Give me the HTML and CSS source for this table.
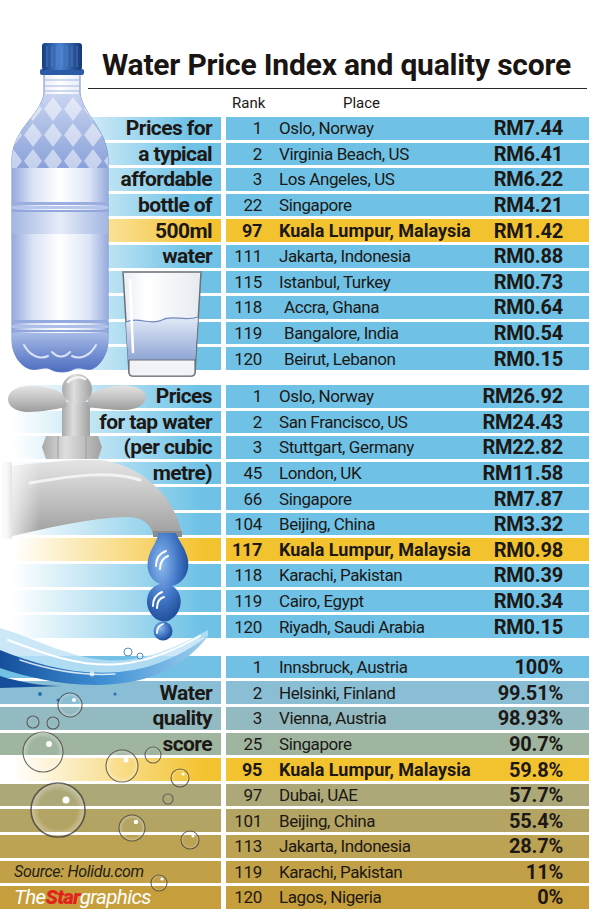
FILE: index.html
```html
<!DOCTYPE html>
<html lang="en">
<head>
<meta charset="utf-8">
<title>Water Price Index and quality score</title>
<link rel="stylesheet" href="styles.css">
</head>
<body>
<div class="page">
  <svg class="art" viewBox="0 0 240 924" width="240" height="924" aria-hidden="true">
    <defs>
      <linearGradient id="gCap" x1="0" x2="1" y1="0" y2="0">
        <stop offset="0" stop-color="#163c80"/><stop offset=".45" stop-color="#4a82cf"/><stop offset="1" stop-color="#143877"/>
      </linearGradient>
      <linearGradient id="gBody" x1="0" x2="1" y1="0" y2="0">
        <stop offset="0" stop-color="#95aadc"/><stop offset=".22" stop-color="#dbe3f5"/><stop offset=".5" stop-color="#ffffff"/><stop offset=".8" stop-color="#dde5f6"/><stop offset="1" stop-color="#97abdc"/>
      </linearGradient>
      <linearGradient id="gBand" x1="0" x2="1" y1="0" y2="0">
        <stop offset="0" stop-color="#a3b6e2"/><stop offset=".5" stop-color="#e6ecf8"/><stop offset="1" stop-color="#a3b6e2"/>
      </linearGradient>
      <linearGradient id="gShoulder" x1="0" x2="0" y1="0" y2="1">
        <stop offset="0" stop-color="#c8d4f0"/><stop offset="1" stop-color="#8aa1d9"/>
      </linearGradient>
      <linearGradient id="gBottom" x1="0" x2="0" y1="0" y2="1">
        <stop offset="0" stop-color="#a6bae6"/><stop offset="1" stop-color="#4b6cc0"/>
      </linearGradient>
      <pattern id="pDiam" width="20" height="26" patternUnits="userSpaceOnUse" x="3" y="96">
        <polygon points="10,1 19,13 10,25 1,13" fill="#ffffff" fill-opacity=".5"/>
      </pattern>
      <linearGradient id="gWater" x1="0" x2="0" y1="0" y2="1">
        <stop offset="0" stop-color="#e4ebf7"/><stop offset="1" stop-color="#8ea5d5"/>
      </linearGradient>
      <linearGradient id="gGlass" x1="0" x2="1" y1="0" y2="0">
        <stop offset="0" stop-color="#e9edf3"/><stop offset=".3" stop-color="#ffffff"/><stop offset="1" stop-color="#e6eaf0"/>
      </linearGradient>
      <linearGradient id="gTap" x1="0" x2="0" y1="0" y2="1">
        <stop offset="0" stop-color="#e4e4e4"/><stop offset=".5" stop-color="#c2c2c2"/><stop offset="1" stop-color="#9c9c9c"/>
      </linearGradient>
      <linearGradient id="gTapH" x1="0" x2="1" y1="0" y2="0">
        <stop offset="0" stop-color="#a9a9a9"/><stop offset=".4" stop-color="#dedede"/><stop offset="1" stop-color="#a0a0a0"/>
      </linearGradient>
      <linearGradient id="gFade" x1="0" x2="1" y1="0" y2="0">
        <stop offset="0" stop-color="#ffffff"/><stop offset="1" stop-color="#ffffff" stop-opacity="0"/>
      </linearGradient>
      <radialGradient id="gDrop" cx=".35" cy=".35" r=".7">
        <stop offset="0" stop-color="#8dbaf0"/><stop offset=".6" stop-color="#3f74c4"/><stop offset="1" stop-color="#1d4a96"/>
      </radialGradient>
      <linearGradient id="gWave" x1="0" x2="1" y1="0" y2="0">
        <stop offset="0" stop-color="#154f9c"/><stop offset=".5" stop-color="#3f8fd4"/><stop offset="1" stop-color="#9fd0f0"/>
      </linearGradient>
      <radialGradient id="gBub" cx=".5" cy=".5" r=".5">
        <stop offset=".7" stop-color="#ffffff" stop-opacity="0"/><stop offset="1" stop-color="#ffffff" stop-opacity=".35"/>
      </radialGradient>
    </defs>

    <!-- bottle -->
    <g class="bottle">
      <path d="M44,74 L80,74 L80,94 C84,116 106,128 108,158 L108,340 C108,354 100,366 92,369 C86,371 80,366 74,369 C68,373 56,373 50,369 C44,366 38,371 30,369 C20,366 12,354 12,340 L12,158 C14,128 40,116 44,94 Z" fill="url(#gBody)" stroke="#7289c9" stroke-width="1"/>
      <path d="M44,94 C40,116 14,128 12,158 L12,168 L108,168 L108,158 C106,128 84,116 80,94 Z" fill="url(#gShoulder)"/>
      <path d="M44,94 C40,116 14,128 12,158 L12,168 L108,168 L108,158 C106,128 84,116 80,94 Z" fill="url(#pDiam)"/>
      <rect x="12" y="168" width="96" height="34" fill="url(#gBody)"/>
      <rect x="12" y="202" width="96" height="3" fill="#9aafdf"/>
      <rect x="12" y="206" width="96" height="3" fill="#b7c6ec"/>
      <rect x="12" y="210" width="96" height="2" fill="#92a8dc"/>
      <rect x="12" y="212" width="96" height="22" fill="url(#gBand)"/>
      <rect x="12" y="234" width="96" height="86" fill="url(#gBody)"/>
      <rect x="12" y="320" width="96" height="3" fill="#94a9dc"/>
      <rect x="12" y="325" width="96" height="3" fill="#aebfe8"/>
      <rect x="12" y="330" width="96" height="2" fill="#90a6da"/>
      <path d="M12,333 L108,333 L108,340 C108,354 100,366 92,369 C86,371 80,366 74,369 C68,373 56,373 50,369 C44,366 38,371 30,369 C20,366 12,354 12,340 Z" fill="url(#gBottom)"/>
      <path d="M24,345 C30,356 40,360 48,356 M72,356 C80,360 90,356 96,345 M52,352 C58,358 64,358 70,352" fill="none" stroke="#dbe4f7" stroke-width="2" stroke-linecap="round"/>
      <path d="M44,80 L80,80 M44,86 L80,86 M44,91 L80,91" stroke="#a3b5e2" stroke-width="1.2"/>
      <rect x="40" y="69" width="44" height="6" rx="2" fill="#2b5ba6"/>
      <rect x="42" y="43" width="40" height="27" rx="3" fill="url(#gCap)"/>
      <path d="M47,46 V67 M52,46 V67 M57,46 V67 M62,46 V67 M67,46 V67 M72,46 V67 M77,46 V67" stroke="#6b97d8" stroke-opacity=".55" stroke-width="1"/>
    </g>

    <!-- glass -->
    <g class="glass">
      <path d="M123,272 L201,272 L195,372 Q195,376 191,376 L133,376 Q129,376 129,372 Z" fill="url(#gGlass)" stroke="#6c7079" stroke-width="1.5"/>
      <path d="M126,322 C138,316 150,326 162,320 C172,314 184,322 198,317 L195,360 L128,360 Z" fill="url(#gWater)"/>
      <path d="M126,322 C138,316 150,326 162,320 C172,314 184,322 198,317" fill="none" stroke="#6f88c2" stroke-width="1.2"/>
      <path d="M129,360 L195,360 L195,372 Q195,376 191,376 L133,376 Q129,376 129,372 Z" fill="#f1f3f6" stroke="#6c7079" stroke-width="1.2"/>
      <path d="M130,280 L133,352" stroke="#ffffff" stroke-width="2.5" stroke-linecap="round"/>
      <path d="M123,272 L201,272" stroke="#8a8e96" stroke-width="2"/>
    </g>

    <!-- tap -->
    <g class="tap">
      <path d="M5,466 C35,464 60,461 75,460 L100,460 C135,464 166,488 178,520 L182,534 L153,534 C150,523 142,517 126,517 C90,518 45,528 5,538 Z" fill="url(#gTap)"/>
      <path d="M30,483 C70,476 110,470 140,480" fill="none" stroke="#f2f2f2" stroke-width="3" stroke-linecap="round"/>
      <path d="M153,531 L182,531 L182,537 L153,537 Z" fill="#8c8c8c"/>
      <rect x="2" y="462" width="10" height="77" rx="2" fill="url(#gTapH)"/>
      <path d="M46,436 L98,436 L102,447 L98,459 L46,459 L42,447 Z" fill="url(#gTapH)"/>
      <path d="M58,436 V459 M86,436 V459" stroke="#9a9a9a" stroke-width="1"/>
      <rect x="62" y="402" width="28" height="34" fill="url(#gTapH)"/>
      <path d="M66,396 C50,384 20,382 10,393 C4,402 12,412 28,412 C42,412 56,409 66,407 Z" fill="url(#gTap)"/>
      <path d="M88,396 C104,384 134,382 144,392 C150,401 140,410 124,410 C110,410 98,408 88,407 Z" fill="url(#gTap)"/>
      <circle cx="77" cy="389" r="15" fill="url(#gTapH)"/>
      <path d="M68,382 C72,377 80,376 85,379" fill="none" stroke="#f4f4f4" stroke-width="2.5" stroke-linecap="round"/>
      <rect x="0" y="455" width="40" height="90" fill="url(#gFade)"/>
    </g>

    <!-- drops -->
    <g class="drops">
      <path d="M158,533 L176,533 C178,540 186,548 188,560 C190,574 182,584 172,586 C184,592 184,612 170,620 C160,626 146,614 147,600 C148,590 154,586 160,584 C150,580 146,570 148,560 C150,548 158,542 158,533 Z" fill="url(#gDrop)"/>
      <circle cx="163" cy="631" r="9.5" fill="url(#gDrop)"/>
      <path d="M156,566 C156,558 160,553 166,551 M160,569 C160,562 163,558 168,556" fill="none" stroke="#ffffff" stroke-width="2" stroke-linecap="round"/>
      <path d="M153,606 C153,598 157,594 162,592 M157,608 C157,602 160,598 164,597" fill="none" stroke="#ffffff" stroke-width="2" stroke-linecap="round"/>
      <path d="M157,633 C157,628 160,625 163,624" fill="none" stroke="#ffffff" stroke-width="1.8" stroke-linecap="round"/>
    </g>

    <!-- wave -->
    <g class="wave">
      <path d="M0,628 C40,640 80,664 125,660 C160,656 185,642 208,630 L208,636 C185,652 160,668 120,672 C75,676 35,664 0,650 Z" fill="#bfe2f6" fill-opacity=".8"/>
      <path d="M0,650 C35,664 75,676 120,672 C160,668 185,652 208,636 C190,660 160,680 115,684 C70,688 30,678 0,668 Z" fill="url(#gWave)"/>
      <path d="M0,676 C20,682 40,686 62,686 L0,688 Z" fill="#154f9c"/>
      <path d="M8,640 C40,652 80,668 120,664 C150,661 175,650 200,636" fill="none" stroke="#ffffff" stroke-width="2" stroke-linecap="round"/>
      <path d="M20,660 C50,670 85,676 115,674" fill="none" stroke="#ffffff" stroke-opacity=".8" stroke-width="1.5" stroke-linecap="round"/>
      <circle cx="128" cy="652" r="4" fill="#ffffff" fill-opacity=".6" stroke="#2d6fb5" stroke-width=".8"/>
      <circle cx="140" cy="656" r="3" fill="#ffffff" fill-opacity=".6" stroke="#2d6fb5" stroke-width=".8"/>
      <circle cx="92" cy="674" r="2.5" fill="#ffffff" fill-opacity=".7"/>
      <circle cx="152" cy="648" r="2.5" fill="#ffffff" fill-opacity=".7"/>
      <circle cx="40" cy="694" r="2" fill="#2d6fb5"/>
      <circle cx="115" cy="694" r="1.6" fill="#2d6fb5"/>
      <circle cx="58" cy="700" r="1.5" fill="#2d6fb5"/>
    </g>

    <!-- bubbles -->
    <g class="bubbles" fill="url(#gBub)" stroke="#3b3a36" stroke-opacity=".75" stroke-width="1.1">
      <circle cx="70" cy="705" r="12"/>
      <circle cx="33" cy="722" r="6"/>
      <circle cx="53" cy="723" r="6"/>
      <circle cx="43" cy="752" r="20"/>
      <circle cx="122" cy="766" r="16"/>
      <circle cx="153" cy="755" r="8"/>
      <circle cx="180" cy="778" r="9"/>
      <circle cx="168" cy="799" r="5"/>
      <circle cx="58" cy="810" r="27" stroke-width="1.6"/>
      <circle cx="132" cy="828" r="13"/>
      <circle cx="190" cy="840" r="9"/>
      <circle cx="159" cy="883" r="8"/>
    </g>
    <g class="shine" fill="#ffffff">
      <circle cx="74" cy="700" r="2"/>
      <circle cx="49" cy="744" r="3"/>
      <circle cx="126" cy="760" r="2.5"/>
      <circle cx="66" cy="800" r="3.5"/>
      <circle cx="136" cy="822" r="2.2"/>
      <circle cx="183" cy="774" r="1.6"/>
      <circle cx="162" cy="879" r="1.6"/>
      <circle cx="193" cy="836" r="1.5"/>
    </g>
  </svg>

  <header class="head">
    <h1 class="title">Water Price Index and quality score</h1>
    <div class="rule"></div>
    <div class="colhead"><span class="ch-rank">Rank</span><span class="ch-place">Place</span></div>
  </header>

  <section class="sec sec-bottle">
    <div class="row"><div class="label lb-blue"><span class="lt">Prices for</span></div><div class="cell c-blue"><span class="rank">1</span><span class="place">Oslo, Norway</span><span class="val">RM7.44</span></div></div>
    <div class="row"><div class="label lb-blue"><span class="lt">a typical</span></div><div class="cell c-blue"><span class="rank">2</span><span class="place">Virginia Beach, US</span><span class="val">RM6.41</span></div></div>
    <div class="row"><div class="label lb-blue"><span class="lt">affordable</span></div><div class="cell c-blue"><span class="rank">3</span><span class="place">Los Angeles, US</span><span class="val">RM6.22</span></div></div>
    <div class="row"><div class="label lb-blue"><span class="lt">bottle of</span></div><div class="cell c-blue"><span class="rank">22</span><span class="place">Singapore</span><span class="val">RM4.21</span></div></div>
    <div class="row"><div class="label lb-yellow"><span class="lt">500ml</span></div><div class="cell c-yellow hl"><span class="rank">97</span><span class="place">Kuala Lumpur, Malaysia</span><span class="val">RM1.42</span></div></div>
    <div class="row"><div class="label lb-blue"><span class="lt">water</span></div><div class="cell c-blue"><span class="rank">111</span><span class="place">Jakarta, Indonesia</span><span class="val">RM0.88</span></div></div>
    <div class="row"><div class="label lb-blue"></div><div class="cell c-blue"><span class="rank">115</span><span class="place">Istanbul, Turkey</span><span class="val">RM0.73</span></div></div>
    <div class="row"><div class="label lb-blue"></div><div class="cell c-blue"><span class="rank">118</span><span class="place indent">Accra, Ghana</span><span class="val">RM0.64</span></div></div>
    <div class="row"><div class="label lb-blue"></div><div class="cell c-blue"><span class="rank">119</span><span class="place indent">Bangalore, India</span><span class="val">RM0.54</span></div></div>
    <div class="row"><div class="label lb-blue"></div><div class="cell c-blue"><span class="rank">120</span><span class="place indent">Beirut, Lebanon</span><span class="val">RM0.15</span></div></div>
  </section>

  <section class="sec sec-tap">
    <div class="row"><div class="label lb-fade"><span class="lt">Prices</span></div><div class="cell c-blue"><span class="rank">1</span><span class="place">Oslo, Norway</span><span class="val">RM26.92</span></div></div>
    <div class="row"><div class="label lb-fade"><span class="lt">for tap water</span></div><div class="cell c-blue"><span class="rank">2</span><span class="place">San Francisco, US</span><span class="val">RM24.43</span></div></div>
    <div class="row"><div class="label lb-fade"><span class="lt">(per cubic</span></div><div class="cell c-blue"><span class="rank">3</span><span class="place">Stuttgart, Germany</span><span class="val">RM22.82</span></div></div>
    <div class="row"><div class="label lb-fade"><span class="lt">metre)</span></div><div class="cell c-blue"><span class="rank">45</span><span class="place">London, UK</span><span class="val">RM11.58</span></div></div>
    <div class="row"><div class="label lb-fade"></div><div class="cell c-blue"><span class="rank">66</span><span class="place">Singapore</span><span class="val">RM7.87</span></div></div>
    <div class="row"><div class="label lb-fade"></div><div class="cell c-blue"><span class="rank">104</span><span class="place">Beijing, China</span><span class="val">RM3.32</span></div></div>
    <div class="row"><div class="label lb-yellow"></div><div class="cell c-yellow hl"><span class="rank">117</span><span class="place">Kuala Lumpur, Malaysia</span><span class="val">RM0.98</span></div></div>
    <div class="row"><div class="label lb-fade"></div><div class="cell c-blue"><span class="rank">118</span><span class="place">Karachi, Pakistan</span><span class="val">RM0.39</span></div></div>
    <div class="row"><div class="label lb-fade"></div><div class="cell c-blue"><span class="rank">119</span><span class="place">Cairo, Egypt</span><span class="val">RM0.34</span></div></div>
    <div class="row"><div class="label lb-fade"></div><div class="cell c-blue"><span class="rank">120</span><span class="place">Riyadh, Saudi Arabia</span><span class="val">RM0.15</span></div></div>
  </section>

  <section class="sec sec-quality">
    <div class="row"><div class="label q1"></div><div class="cell q1"><span class="rank">1</span><span class="place">Innsbruck, Austria</span><span class="val">100%</span></div></div>
    <div class="row"><div class="label q2"><span class="lt">Water</span></div><div class="cell q2"><span class="rank">2</span><span class="place">Helsinki, Finland</span><span class="val">99.51%</span></div></div>
    <div class="row"><div class="label q3"><span class="lt">quality</span></div><div class="cell q3"><span class="rank">3</span><span class="place">Vienna, Austria</span><span class="val">98.93%</span></div></div>
    <div class="row"><div class="label q4"><span class="lt">score</span></div><div class="cell q4"><span class="rank">25</span><span class="place">Singapore</span><span class="val">90.7%</span></div></div>
    <div class="row"><div class="label lb-yellow"></div><div class="cell c-yellow hl"><span class="rank">95</span><span class="place">Kuala Lumpur, Malaysia</span><span class="val">59.8%</span></div></div>
    <div class="row"><div class="label q6"></div><div class="cell q6"><span class="rank">97</span><span class="place">Dubai, UAE</span><span class="val">57.7%</span></div></div>
    <div class="row"><div class="label q7"></div><div class="cell q7"><span class="rank">101</span><span class="place">Beijing, China</span><span class="val">55.4%</span></div></div>
    <div class="row"><div class="label q8"></div><div class="cell q8"><span class="rank">113</span><span class="place">Jakarta, Indonesia</span><span class="val">28.7%</span></div></div>
    <div class="row"><div class="label q9 foot"><span class="source">Source: Holidu.com</span></div><div class="cell q9"><span class="rank">119</span><span class="place">Karachi, Pakistan</span><span class="val">11%</span></div></div>
    <div class="row"><div class="label q10 foot"><span class="logo"><span class="l-the">The</span><span class="l-star">Star</span><span class="l-gr">graphics</span></span></div><div class="cell q10"><span class="rank">120</span><span class="place">Lagos, Nigeria</span><span class="val">0%</span></div></div>
  </section>
</div>
</body>
</html>
```

FILE: styles.css
```css
* { box-sizing: border-box; }

html, body {
  margin: 0;
  padding: 0;
  background: #ffffff;
}

body {
  font-family: Roboto, "Liberation Sans", Arial, sans-serif;
  color: #1c1815;
}

.page {
  position: relative;
  width: 600px;
  height: 924px;
  overflow: hidden;
  background: #ffffff;
}

.art {
  position: absolute;
  left: 0;
  top: 0;
  z-index: 1;
  pointer-events: none;
}

/* header */
.head {
  padding-top: 47.8px;
}

.title {
  margin: 0;
  padding-left: 102px;
  font-weight: 700;
  font-size: 30px;
  line-height: 34px;
  letter-spacing: -0.2px;
  color: #1a1512;
  white-space: nowrap;
}

.rule {
  margin-top: 6.2px;
  margin-left: 88px;
  width: 499px;
  height: 1.5px;
  background: #2a2623;
}

.colhead {
  display: flex;
  margin-top: 4.4px;
  margin-bottom: 5.1px;
  padding-left: 232px;
  font-size: 15px;
  line-height: 18px;
  height: 18px;
  color: #1c1815;
}

.ch-rank { width: 111px; }

/* sections */
.sec {
  display: flex;
  flex-direction: column;
  gap: 3px;
}

.sec-tap { margin-top: 15px; }
.sec-quality { margin-top: 18px; }

.row {
  display: grid;
  grid-template-columns: 221px 363px;
  column-gap: 5px;
  height: 22.6px;
}

.label {
  display: flex;
  align-items: center;
  justify-content: flex-end;
  padding-right: 9px;
  font-weight: 700;
  font-size: 21px;
  line-height: 22px;
  letter-spacing: -0.6px;
  white-space: nowrap;
}

.lt {
  position: relative;
  z-index: 2;
}

.cell {
  display: flex;
  align-items: center;
  padding-right: 26px;
  font-size: 17px;
  line-height: 22px;
  white-space: nowrap;
}

.rank {
  width: 36px;
  text-align: right;
  letter-spacing: -0.3px;
}

.place {
  flex: 1;
  padding-left: 17px;
  letter-spacing: -0.4px;
}

.place.indent { padding-left: 22px; }

.val {
  font-weight: 700;
  font-size: 20px;
  letter-spacing: -0.2px;
  text-align: right;
}

.hl .rank { font-weight: 700; font-size: 18px; }
.hl .place { font-weight: 700; font-size: 18px; letter-spacing: 0; }

/* colours */
.c-blue { background: #6fc2e6; }
.c-yellow { background: #f3c22f; }

.lb-blue { background: linear-gradient(90deg, #ffffff 0px, #ffffff 40px, #6fc2e6 190px); }
.lb-fade { background: linear-gradient(90deg, #ffffff 0px, #ffffff 12px, #6fc2e6 200px); }
.lb-yellow { background: linear-gradient(90deg, #ffffff 0px, #ffffff 12px, #f3c22f 205px); }

.q1 { background: #72c1e4; }
.q2 { background: #89bed4; }
.q3 { background: #93bac0; }
.q4 { background: #9fb59f; }
.q6 { background: #aca877; }
.q7 { background: #b4a464; }
.q8 { background: #bca253; }
.q9 { background: #c2a047; }
.q10 { background: #c79e3c; }

/* footer */
.label.foot {
  justify-content: flex-start;
  padding-left: 14px;
  padding-right: 0;
}

.source {
  position: relative;
  z-index: 2;
  font-weight: 400;
  font-style: italic;
  font-size: 16px;
  letter-spacing: -0.3px;
  color: #221d18;
}

.logo {
  position: relative;
  z-index: 2;
  font-style: italic;
  font-size: 20.5px;
  letter-spacing: -0.6px;
  color: #ffffff;
  font-weight: 400;
}

.l-star {
  color: #e0231f;
  font-weight: 900;
  letter-spacing: -0.8px;
}
```
